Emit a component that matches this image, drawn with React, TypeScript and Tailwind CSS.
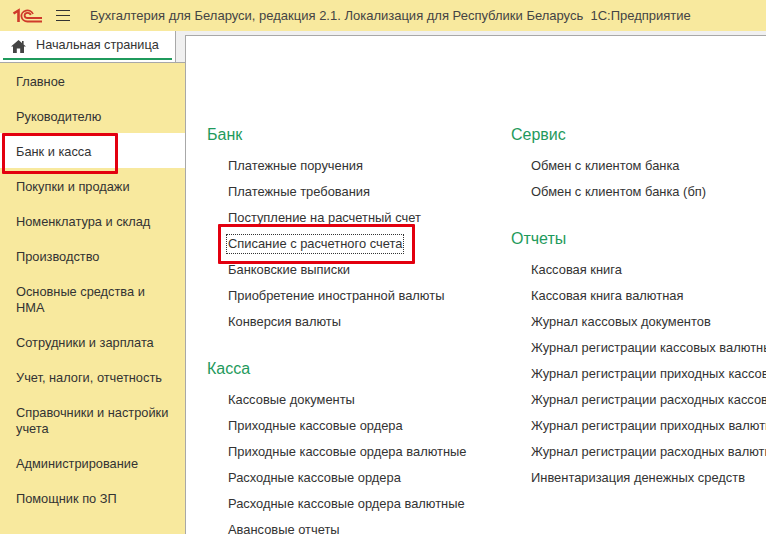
const nav: { t: string; h: number; active?: boolean }[] = [
  { t: "Главное", h: 35 },
  { t: "Руководителю", h: 35 },
  { t: "Банк и касса", h: 35, active: true },
  { t: "Покупки и продажи", h: 35 },
  { t: "Номенклатура и склад", h: 35 },
  { t: "Производство", h: 35 },
  { t: "Основные средства и НМА", h: 51 },
  { t: "Сотрудники и зарплата", h: 35 },
  { t: "Учет, налоги, отчетность", h: 35 },
  { t: "Справочники и настройки учета", h: 51 },
  { t: "Администрирование", h: 35 },
  { t: "Помощник по ЗП", h: 35 },
];

function Section({ title, items, className = "" }: { title: string; items: string[]; className?: string }) {
  return (
    <div className={className}>
      <div className="text-[16px] leading-[20px] text-[#1f9a5c]">{title}</div>
      <div className="mt-[8px] pl-[21px] text-[12.9px]">
        {items.map((i) => (
          <div key={i} className="h-[26px] leading-[26px] whitespace-nowrap text-[#333]">
            {i === "Списание с расчетного счета" ? (
              <span className="inline-block leading-[18px] px-[1px] -ml-[1px] outline-1 outline-dotted outline-[#333]">{i}</span>
            ) : (
              i
            )}
          </div>
        ))}
      </div>
    </div>
  );
}

export default function App() {
  return (
    <div className="relative w-[766px] h-[534px] overflow-hidden bg-white text-[12.8px] text-[#333]" style={{ fontFamily: '"Liberation Sans", Arial, sans-serif' }}>
      <div className="h-[31px] bg-[#f8e99e] flex items-center">
        <svg width="32" height="16" viewBox="0 0 32 16" className="ml-[12px] shrink-0" fill="none" stroke="#cf3a2b">
          <path d="M1.5 5.5 L6.5 2.5 V14" strokeWidth="2.6" />
          <path d="M21 6 A6 5.5 0 1 0 15.5 13.5 H30" strokeWidth="1.8" />
          <path d="M18.6 7.2 A3 2.6 0 1 0 15.5 10 H30" strokeWidth="1.8" />
        </svg>
        <div className="ml-[12px] w-[14px] flex flex-col gap-[4px] shrink-0">
          <div className="h-px bg-[#333]" />
          <div className="h-px bg-[#333]" />
          <div className="h-px bg-[#333]" />
        </div>
        <div className="ml-[20px] whitespace-nowrap text-[13px] text-[#444]">
          Бухгалтерия для Беларуси, редакция 2.1. Локализация для Республики Беларусь&nbsp;&nbsp;1С:Предприятие
        </div>
      </div>
      <div className="flex h-[503px]">
        <div className="w-[185px] shrink-0 flex flex-col bg-[#f8e99e]">
          <div className="h-[32px] shrink-0 bg-[#f0f0f0] border-b border-[#a8a8a8]">
            <div className="w-[176px] h-full bg-white border-r border-[#a8a8a8] flex flex-col">
              <div className="flex items-center h-[27px] pt-[3px] pl-[11px]">
                <svg width="15" height="13" viewBox="0 0 15 13" fill="#444" className="shrink-0">
                  <path d="M7.5 0 L11 3 V1 H12.6 V4.4 L15 6.6 H13 V13 H9.2 V8.4 H5.8 V13 H2 V6.6 H0 Z" />
                </svg>
                <span className="ml-[10px] whitespace-nowrap text-[12.7px]">Начальная страница</span>
              </div>
              <div className="ml-[3px] w-[169px] h-[2px] bg-[#1f9a5c]" />
            </div>
          </div>
          {nav.map((n) => (
            <div
              key={n.t}
              style={{ height: n.h }}
              className={`flex items-center pt-[2px] pl-[16px] pr-[16px] leading-[16px] ${n.active ? "bg-white" : ""}`}
            >
              {n.t}
            </div>
          ))}
        </div>
        <div className="flex-1 bg-[#f0f0f0] pt-[4px] min-w-0">
          <div className="h-full bg-white border-t border-l border-[#a8a8a8] pl-[21px] pt-[89px] flex">
            <div className="w-[304px] shrink-0">
              <Section
                title="Банк"
                items={[
                  "Платежные поручения",
                  "Платежные требования",
                  "Поступление на расчетный счет",
                  "Списание с расчетного счета",
                  "Банковские выписки",
                  "Приобретение иностранной валюты",
                  "Конверсия валюты",
                ]}
              />
              <Section
                className="mt-[24px]"
                title="Касса"
                items={[
                  "Кассовые документы",
                  "Приходные кассовые ордера",
                  "Приходные кассовые ордера валютные",
                  "Расходные кассовые ордера",
                  "Расходные кассовые ордера валютные",
                  "Авансовые отчеты",
                ]}
              />
            </div>
            <div className="[&_div.pl-\[21px\]]:pl-[20px]">
              <Section title="Сервис" items={["Обмен с клиентом банка", "Обмен с клиентом банка (бп)"]} />
              <Section
                className="mt-[24px]"
                title="Отчеты"
                items={[
                  "Кассовая книга",
                  "Кассовая книга валютная",
                  "Журнал кассовых документов",
                  "Журнал регистрации кассовых валютных документов",
                  "Журнал регистрации приходных кассовых документов",
                  "Журнал регистрации расходных кассовых документов",
                  "Журнал регистрации приходных валютных документов",
                  "Журнал регистрации расходных валютных документов",
                  "Инвентаризация денежных средств",
                ]}
              />
            </div>
          </div>
        </div>
      </div>
      <div className="absolute left-[2px] top-[133px] w-[116px] h-[41px] border-[3px] border-[#e3000f] rounded-[1px]" />
      <div className="absolute left-[218px] top-[224px] w-[197px] h-[40px] border-[3px] border-[#e3000f] rounded-[1px]" />
    </div>
  );
}
